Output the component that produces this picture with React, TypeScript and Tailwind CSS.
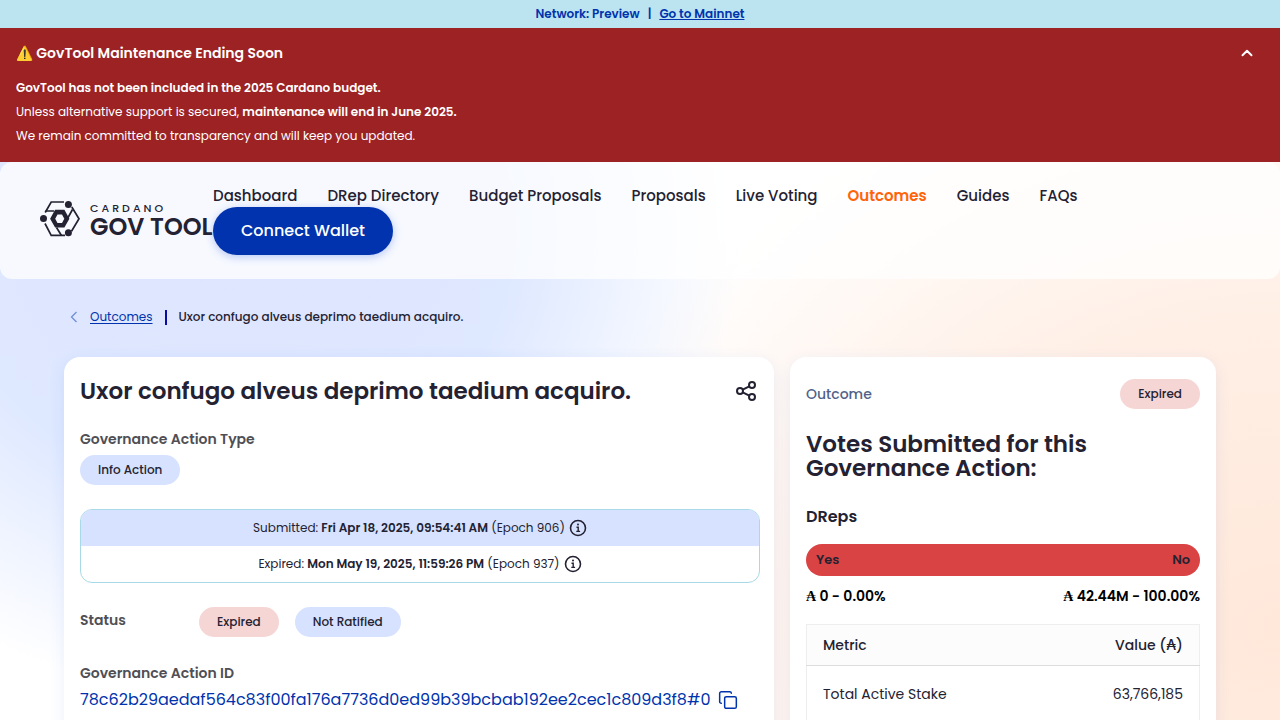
import { ChevronUp, Copy } from "lucide-react";
import type { ReactNode } from "react";

const navItems = ["Dashboard", "DRep Directory", "Budget Proposals", "Proposals", "Live Voting", "Outcomes", "Guides", "FAQs"];

function LogoMark() {
  return (
    <svg width="40" height="36" viewBox="0 0 40 36" fill="none" stroke="#242232" strokeWidth="1.700" className="shrink-0" aria-hidden="true">
      <path d="M5.200 11.500 11.200 1H24M5 22.500l6.200 11.800H25M31.800 6l7.200 11.700-7.500 12.500" />
      <path d="M5.500 10H14M32.500 8.500 27.800 17M16.500 26.500l4.800 7.800" />
      <path fill="#242232" stroke="none" fillRule="evenodd" d="M15.100 8.800h9.300l5 8.900-5 8.900h-9.300l-5-8.900ZM17.500 13.500l-2.300 4.200 2.300 4.200h4.500l2.300-4.200-2.300-4.200Z" />
      <g fill="#242232" stroke="none">
        <circle cx="3.500" cy="17.500" r="3.500" />
        <circle cx="28.400" cy="3.500" r="3.500" />
        <circle cx="28.400" cy="31.700" r="3.500" />
      </g>
    </svg>
  );
}

function Logo() {
  return (
    <a href="#home" className="flex w-[173px] shrink-0 items-center gap-[10px] pb-1 whitespace-nowrap text-[#242232]">
      <LogoMark />
      <span className="flex flex-col">
        <span className="text-[11px] leading-4 font-medium tracking-[3px]">CARDANO</span>
        <span className="text-2xl leading-[22px] font-semibold">GOV TOOL</span>
      </span>
    </a>
  );
}

function Pill({ tone, children }: { tone: "blue" | "red"; children: ReactNode }) {
  return (
    <span className={`inline-flex h-[30px] items-center rounded-full px-[18px] text-xs font-medium ${tone === "blue" ? "bg-[#d6e2ff]" : "bg-[#f6d5d5]"}`}>
      {children}
    </span>
  );
}

function InfoIcon() {
  return (
    <svg width="18" height="18" viewBox="0 0 18 18" fill="none" stroke="#242232" strokeWidth="1.600" aria-hidden="true">
      <circle cx="9" cy="9" r="7.500" />
      <path d="M7.500 8.300h1.700v4M7.300 12.400h3.800" strokeWidth="1.400" />
      <circle cx="9" cy="5.600" r="1" fill="#242232" stroke="none" />
    </svg>
  );
}

function ShareIcon() {
  return (
    <svg width="24" height="24" viewBox="0 0 24 24" fill="none" stroke="#242232" strokeWidth="2" aria-hidden="true">
      <circle cx="6" cy="12" r="3" />
      <circle cx="18" cy="6" r="3" />
      <circle cx="18" cy="18" r="3" />
      <path d="m8.700 10.700 6.600-3.400M8.700 13.300l6.600 3.400" />
    </svg>
  );
}

function DateRow({ label, date, epoch, shaded }: { label: string; date: string; epoch: number; shaded?: boolean }) {
  return (
    <div className={`flex h-9 items-center justify-center gap-1 text-xs ${shaded ? "bg-[#d6e2ff]" : ""}`}>
      <p>
        {label}: <strong className="font-semibold">{date}</strong> (Epoch {epoch})
      </p>
      <InfoIcon />
    </div>
  );
}

function VoteTotal({ children }: { children: ReactNode }) {
  return (
    <span>
      <span className="font-['Liberation_Serif',serif]">₳</span> {children}
    </span>
  );
}

export default function App() {
  return (
    <div className="min-h-screen overflow-hidden bg-white font-[Poppins,Inter,sans-serif] text-[#242232]">
      <div className="flex h-7 items-center justify-center gap-2 bg-[#bce4f0] text-xs font-semibold text-[#0033ad]">
        <span>Network: Preview</span>
        <span>|</span>
        <a href="#mainnet" className="underline">Go to Mainnet</a>
      </div>

      <section className="bg-[#9c2224] px-4 pt-[9px] pb-[14px] text-white">
        <div className="flex h-8 items-center justify-between">
          <h2 className="text-sm font-semibold">⚠️ GovTool Maintenance Ending Soon</h2>
          <button type="button" aria-label="Collapse notice" className="mr-2">
            <ChevronUp size={18} strokeWidth={2.6} />
          </button>
        </div>
        <div className="pt-[7px] text-xs leading-6">
          <p className="font-semibold">GovTool has not been included in the 2025 Cardano budget.</p>
          <p>Unless alternative support is secured, <strong className="font-semibold">maintenance will end in June 2025.</strong></p>
          <p>We remain committed to transparency and will keep you updated.</p>
        </div>
      </section>

      <div className="bg-[radial-gradient(ellipse_40%_80%_at_18%_12%,#dfe5ff_0%,#dee8ff_55%,#dee8ff00_100%),radial-gradient(ellipse_58%_105%_at_100%_80%,#ffe8da_0%,#ffefe5_50%,#ffefe500_100%)]">
        <header className="flex min-h-[117px] items-center rounded-xl bg-white/75 px-10">
          <Logo />
          <nav className="flex flex-col items-start">
            <ul className="flex h-[21px] items-center gap-[30px] text-[15px] font-medium whitespace-nowrap">
              {navItems.map((item) => (
                <li key={item}>
                  <a href="#nav" className={item === "Outcomes" ? "font-semibold text-[#ff640a]" : ""}>{item}</a>
                </li>
              ))}
            </ul>
            <button type="button" className="z-10 h-12 rounded-full bg-[#0033ad] px-7 text-base font-medium text-white shadow-[0_2px_8px_#2f62dc55]">
              Connect Wallet
            </button>
          </nav>
        </header>

        <nav aria-label="Breadcrumb" className="mb-[2px] flex h-[76px] items-center gap-3 px-16 text-xs">
          <a href="#outcomes" className="flex items-center gap-[10px] pl-1 text-[#0033ad]">
            <svg width="12" height="12" viewBox="0 0 12 12" fill="none" stroke="#6f8fd8" strokeWidth="1.300" aria-hidden="true">
              <path d="M8.500 1 3.500 6l5 5" />
            </svg>
            <span className="underline underline-offset-2">Outcomes</span>
          </a>
          <span className="h-[15px] w-[2px] bg-[#0a0aa5]" />
          <span className="font-medium">Uxor confugo alveus deprimo taedium acquiro.</span>
        </nav>

        <main className="grid grid-cols-[5fr_3fr] gap-4 px-16">
          <section className="rounded-t-2xl bg-white pt-[18px] pr-[14px] pb-8 pl-4 shadow-[0_4px_16px_#2f62dc18]">
            <div className="flex h-8 items-center justify-between">
              <h1 className="text-[23px] leading-[30px] font-semibold">Uxor confugo alveus deprimo taedium acquiro.</h1>
              <button type="button" aria-label="Share" className="mr-[2px]"><ShareIcon /></button>
            </div>
            <h2 className="mt-[22px] text-sm leading-5 font-semibold text-[#4f4f55]">Governance Action Type</h2>
            <div className="mt-[6px] flex"><Pill tone="blue">Info Action</Pill></div>
            <div className="mt-6 overflow-hidden rounded-xl border border-[#a8d9e6]">
              <DateRow label="Submitted" date="Fri Apr 18, 2025, 09:54:41 AM" epoch={906} shaded />
              <DateRow label="Expired" date="Mon May 19, 2025, 11:59:26 PM" epoch={937} />
            </div>
            <div className="mt-6 flex gap-4">
              <h2 className="w-[103px] text-sm leading-[26px] font-semibold text-[#4f4f55]">Status</h2>
              <Pill tone="red">Expired</Pill>
              <Pill tone="blue">Not Ratified</Pill>
            </div>
            <h2 className="mt-[26px] text-sm leading-5 font-semibold text-[#4f4f55]">Governance Action ID</h2>
            <div className="mt-[5px] flex items-center gap-2 text-[#0033ad]">
              <p className="text-base leading-6 whitespace-nowrap">78c62b29aedaf564c83f00fa176a7736d0ed99b39bcbab192ee2cec1c809d3f8#0</p>
              <button type="button" aria-label="Copy governance action ID"><Copy size={20} strokeWidth={1.8} /></button>
            </div>
          </section>

          <section className="rounded-t-2xl bg-white px-4 pt-[22px] shadow-[0_4px_16px_#2f62dc18]">
            <div className="flex items-center justify-between">
              <span className="text-sm font-medium text-[#506288]">Outcome</span>
              <Pill tone="red">Expired</Pill>
            </div>
            <h2 className="mt-[23px] max-w-[340px] text-[23px] leading-6 font-semibold">Votes Submitted for this Governance Action:</h2>
            <h3 className="mt-[25px] text-base leading-6 font-semibold">DReps</h3>
            <div className="mt-[15px] flex h-8 items-center justify-between rounded-full bg-[#d94343] px-[10px] text-[13px] font-semibold">
              <span>Yes</span>
              <span>No</span>
            </div>
            <div className="mt-[10px] flex justify-between text-sm leading-5 font-semibold text-black">
              <VoteTotal>0 - 0.00%</VoteTotal>
              <VoteTotal>42.44M - 100.00%</VoteTotal>
            </div>
            <table className="mt-[17px] w-full border border-[#eeeeee] text-sm">
              <thead>
                <tr className="h-[41px] border-b border-[#dcdcdc] bg-[#fcfcfc]">
                  <th className="px-4 text-left font-medium">Metric</th>
                  <th className="px-4 text-right font-medium">Value (₳)</th>
                </tr>
              </thead>
              <tbody>
                <tr className="h-14">
                  <td className="px-4">Total Active Stake</td>
                  <td className="px-4 text-right">63,766,185</td>
                </tr>
              </tbody>
            </table>
          </section>
        </main>
      </div>
    </div>
  );
}
